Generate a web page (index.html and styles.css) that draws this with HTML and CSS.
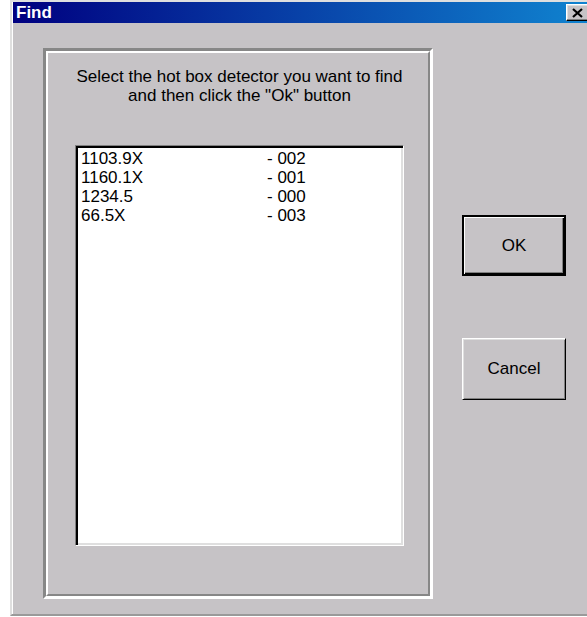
FILE: index.html
```html
<!DOCTYPE html>
<html lang="en">
<head>
<meta charset="utf-8">
<title>Find</title>
<link rel="stylesheet" href="styles.css">
</head>
<body>
<div class="window">
  <div class="titlebar">
    <span class="title">Find</span>
    <button class="close" aria-label="Close">
      <svg width="11" height="10" viewBox="0 0 11 10" aria-hidden="true">
        <path d="M1 1 L10 9 M10 1 L1 9" stroke="#000" stroke-width="2.2" fill="none"/>
      </svg>
    </button>
  </div>
  <div class="dialog-body">
    <div class="group">
      <div class="group-inner">
        <p class="prompt">Select the hot box detector you want to find<br>and then click the &quot;Ok&quot; button</p>
        <div class="listbox">
          <div class="row"><span>1103.9X</span><span>- 002</span></div>
          <div class="row"><span>1160.1X</span><span>- 001</span></div>
          <div class="row"><span>1234.5</span><span>- 000</span></div>
          <div class="row"><span>66.5X</span><span>- 003</span></div>
        </div>
      </div>
    </div>
    <div class="actions">
      <button class="btn btn-default">OK</button>
      <button class="btn btn-cancel">Cancel</button>
    </div>
  </div>
</div>
</body>
</html>
```
FILE: styles.css
```css
html, body {
  margin: 0;
  padding: 0;
  background: #fff;
  overflow: hidden;
  height: 617px;
}

/* dialog frame */
.window {
  margin: 0 0 0 10px;
  width: 582px;
  height: 616px;
  box-sizing: border-box;
  background: #c6c3c6;
  border-top: 2px solid #dfdfdf;
  border-left: 2px solid #dfdfdf;
  border-bottom: 2px solid #9a9a9a;
  box-shadow: inset 1px 1px #fff;
  padding: 0 0 0 1px;
  font-family: "Liberation Sans", Arial, sans-serif;
  color: #000;
  display: flex;
  flex-direction: column;
}

.titlebar {
  height: 21px;
  flex: none;
  background: linear-gradient(to right, #000080, #1084d0);
  display: flex;
  align-items: center;
  justify-content: space-between;
  padding: 0 3px 0 3px;
  box-sizing: border-box;
}

.title {
  color: #fff;
  font-weight: bold;
  font-size: 17px;
  line-height: 20px;
}

.close {
  width: 23px;
  height: 17px;
  box-sizing: border-box;
  padding: 0;
  background: #c6c3c6;
  border: 1px solid;
  border-color: #fff #000 #000 #fff;
  box-shadow: inset -1px -1px #808080, inset 1px 1px #dfdfdf;
  display: flex;
  align-items: center;
  justify-content: center;
}

.dialog-body {
  display: flex;
  align-items: flex-start;
  padding: 25px 0 0 30px;
}

/* etched group frame */
.group {
  width: 390px;
  height: 551px;
  box-sizing: border-box;
  border: 3px solid;
  border-color: #878787 #fff #fff #878787;
}

.group-inner {
  height: 100%;
  box-sizing: border-box;
  border: 2px solid;
  border-color: #fff #878787 #878787 #fff;
  padding: 14px 24px 48px 27px;
  display: flex;
  flex-direction: column;
}

.prompt {
  margin: 0;
  text-align: center;
  font-size: 17px;
  line-height: 19px;
}

/* sunken list */
.listbox {
  margin-top: 40px;
  flex: 1;
  background: #fff;
  border: 1px solid;
  border-color: #808080 #fff #fff #808080;
  box-shadow: inset 2px 2px #000, inset -2px -2px #dfdfdf;
  padding: 3px 0 0 5px;
}

.row {
  display: grid;
  grid-template-columns: 186px auto;
  font-size: 17px;
  line-height: 19px;
}

.actions {
  display: flex;
  flex-direction: column;
  margin-left: 29px;
  padding-top: 167px;
  gap: 62px;
}

.btn {
  width: 104px;
  height: 61px;
  box-sizing: border-box;
  padding: 0;
  background: #c6c3c6;
  color: #000;
  font-family: "Liberation Sans", Arial, sans-serif;
  font-size: 17px;
  border: 1px solid;
  border-color: #fff #000 #000 #fff;
  box-shadow: inset 1px 1px #dfdfdf, inset -1px -1px #808080;
}

.btn-default {
  border: 2px solid #000;
  box-shadow: inset 1px 1px #fff, inset -1px -1px #000, inset -2px -2px #808080;
}

.btn-cancel {
  height: 62px;
}
```
